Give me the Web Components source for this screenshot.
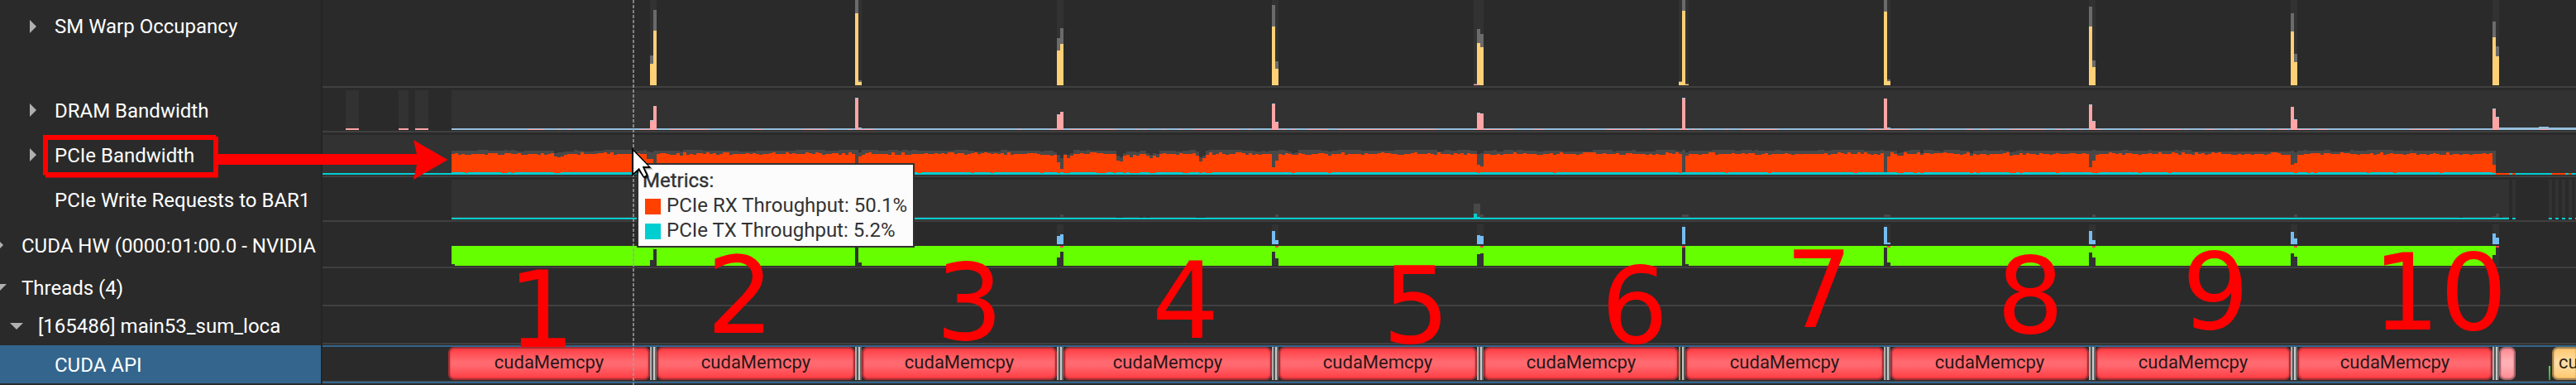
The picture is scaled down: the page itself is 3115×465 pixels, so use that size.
<!DOCTYPE html>
<html lang="en">
<head>
<meta charset="utf-8">
<title>Profiler timeline</title>
<style>
html,body{margin:0;padding:0;background:#2a2a2a;overflow:hidden}
body{font-family:Roboto,"Liberation Sans",sans-serif}
</style>
</head>
<body>
<profiler-app></profiler-app>

<template id="t-app">
<style>
:host{display:grid;grid-template-columns:388px 2px 2725px;width:3115px;height:465px;position:relative;overflow:hidden;background:#2a2a2a;color:#fff}
nav,main{display:flex;flex-direction:column;min-width:0}
.split{background:#242424}
</style>
<nav>
<tree-row h="106" pad="66" arrow="right" ax="36" lift="43">SM Warp Occupancy</tree-row>
<tree-row h="54" pad="66" arrow="right" ax="36">DRAM Bandwidth</tree-row>
<tree-row h="54" pad="66" arrow="right" ax="36">PCIe Bandwidth</tree-row>
<tree-row h="54" pad="66">PCIe Write Requests to BAR1</tree-row>
<tree-row h="56" pad="26" arrow="right" ax="-4">CUDA HW (0000:01:00.0 - NVIDIA</tree-row>
<tree-row h="46" pad="26" arrow="down" ax="-8">Threads (4)</tree-row>
<tree-row h="47" pad="46" arrow="down" ax="12">[165486] main53_sum_loca</tree-row>
<tree-row h="46" pad="66" selected>CUDA API</tree-row>
</nav>
<div class="split"></div>
<main>
<metric-lane kind="sm" y="0" h="106"></metric-lane>
<metric-lane kind="dram" y="106" h="54"></metric-lane>
<metric-lane kind="pcie" y="160" h="54"></metric-lane>
<metric-lane kind="bar" y="214" h="54"></metric-lane>
<metric-lane kind="hw" y="268" h="56"></metric-lane>
<metric-lane kind="none" y="324" h="46"></metric-lane>
<metric-lane kind="none" y="370" h="47"></metric-lane>
<api-lane></api-lane>
</main>
<timeline-cursor></timeline-cursor>
<metrics-tooltip><span slot="title">Metrics:</span>
<tooltip-item color="#ff4000">PCIe RX Throughput: 50.1%</tooltip-item>
<tooltip-item color="#00ced1">PCIe TX Throughput: 5.2%</tooltip-item>
</metrics-tooltip>
<mark-up></mark-up>
</template>

<script>
const shadow=(el,html)=>{const r=el.attachShadow({mode:'open'});r.innerHTML=html;return r};

customElements.define('tree-row',class extends HTMLElement{
  connectedCallback(){
    const a=n=>this.getAttribute(n), h=+a('h'), ar=a('arrow'), lift=+(a('lift')||0);
    const shape=ar==='right'?'M0 0 8 8 0 16Z':'M0 0H16L8 8Z';
    const w=ar==='right'?8:16, hh=ar==='right'?16:8;
    shadow(this,`<style>
:host{display:flex;align-items:center;box-sizing:border-box;height:${h}px;padding-bottom:${lift}px;flex:none;overflow:hidden;white-space:nowrap;
font-size:24px;line-height:30px;color:#fff;background:${this.hasAttribute('selected')?'#33658d':'transparent'}}
.a{width:${a('pad')}px;flex:none;display:flex}
svg{display:block;margin-left:${a('ax')||0}px;overflow:visible}
.t{display:block;padding-top:1px}
</style><span class="a">${ar?`<svg width="${w}" height="${hh}"><path d="${shape}" fill="#b0b0b0"/></svg>`:''}</span><span class="t"><slot></slot></span>`);
  }
});

// Sample columns are 4px wide, the first one starts at x=546.
let seed=11;
const rnd=()=>(seed=(seed*1103515245+12345)&0x7fffffff)/0x7fffffff;
const C={bg:'#323232',grey:'#484848',sm:'#6b6b6b',yel:'#ffd076',pink:'#ffa5a5',blue:'#97bfdd',cyan:'#00ced1',or:'#ff4000',green:'#66ff00',hw:'#75bdf3'};
const R=(x0,y0,x1,y1,f)=>`<rect x="${x0}" y="${y0}" width="${x1-x0}" height="${y1-y0}" fill="${f}"/>`;
const draw={
  sm(){
    let s='';
    // column x, peak top, average top
    const bgs=[[786,794],[1034,1042],[1278,1286],[1538,1546],[1782,1794],[2030,2042],[2278,2286],[2526,2534],[2770,2778],[3014,3022]];
    bgs.forEach(b=>s+=R(b[0],0,b[1],103,C.bg));
    [[786,67,77],[790,12,37],[1034,0,16],[1038,97,99],[1278,46,61],[1282,34,53],[1538,6,32],[1542,74,83],[1782,101,103],[1786,35,52],[1790,41,57],
     [2030,98,99],[2034,0,13],[2038,101,102],[2278,0,14],[2282,96,98],[2526,8,32],[2530,73,81],[2770,16,38],[2774,65,75],[3014,26,45],[3018,56,68]]
     .forEach(([x,p,v])=>s+=R(x,p,x+4,103,C.sm)+R(x,v,x+4,103,C.yel));
    return s+R(1782,102,1790,103,C.pink);
  },
  dram(){
    let s=R(546,109,3115,157,C.bg);
    [[418,434],[482,494],[502,518]].forEach(b=>s+=R(b[0],109,b[1],155,C.bg)+R(b[0],155,b[1],157,C.pink));
    s+=R(546,155,3022,157,C.blue)+R(3022,154,3115,157,C.blue)+R(3070,153,3082,156,C.blue)+R(3070,156,3082,157,C.pink);
    [[638,658],[674,678],[686,690],[774,786],[810,858],[910,922],[970,1002],[1026,1030],[1042,1058],[1230,1234],[1270,1278],[1294,1350],[1374,1378],[1382,1386],[1406,1410],[1426,1430],[1442,1498],[1510,1514],[1550,1554],[1562,1566],[1582,1606],[1618,1738],[1782,1830],[1854,1866],[1942,1986],[1990,2006],[2030,2042],[2046,2050],[2054,2058],[2086,2090],[2106,2150],[2258,2278],[2286,2310],[2334,2338],[2378,2386],[2394,2406],[2430,2474],[2486,2494],[2498,2502],[2514,2518],[2534,2542],[2590,2638],[2642,2646],[2666,2678],[2702,2706],[2742,2746],[2754,2766],[2778,2794],[2802,2814],[2914,2962]]
      .forEach(b=>s+=R(b[0],156,b[1],157,C.pink));
    // column x, write top, read top
    [[786,145,146],[790,128,128],[1034,118,119],[1038,154,156],[1278,138,139],[1282,135,135],[1538,125,126],[1542,147,148],[1786,136,137],[1790,137,137],[2034,118,119],[2278,119,119],[2282,154,156],[2526,126,127],[2530,146,147],[2770,129,129],[2774,144,145],[3014,131,132],[3018,141,142]]
      .forEach(([x,b,p])=>s+=R(x,b,x+4,157,C.blue)+R(x,p,x+4,157,C.pink));
    return s;
  },
  pcie(){
    let s=R(390,163,3115,211,C.bg);
    const dip={670:[185,189],674:[184,190],678:[184,189],682:[183,187],782:[183,192],786:[184,192],790:[182,208],822:[183,188],1034:[181,208],1038:[184,189],
      1258:[183,187],1262:[182,187],1266:[182,187],1270:[182,188],1274:[184,187],1278:[187,196],1282:[191,204],1286:[186,187],1290:[187,191],1294:[185,188],1350:[188,194],1354:[190,195],1358:[185,188],1362:[183,187],1366:[183,190],1370:[183,187],1374:[184,188],1386:[185,188],1390:[187,191],1394:[185,188],1398:[186,190],1446:[183,188],1450:[190,195],1454:[188,191],1458:[182,187],
      1538:[182,202],1542:[182,194],1786:[186,199],1790:[185,201],2034:[181,208],2038:[184,188],2278:[182,208],2282:[182,189],2526:[182,202],2530:[181,194],2770:[182,199],2774:[184,197],3014:[182,199],
      1562:[185,187],1566:[184,187],1606:[183,188],2294:[185,188],2298:[184,188],2322:[185,187],2382:[185,188],2430:[184,188],2434:[183,187]};
    let gt=182;
    for(let x=546;x<3018;x+=4){
      const a=rnd();
      gt=rnd()<.38?(rnd()<.35?181:rnd()<.8?182:183):gt;
      let o=a<.12?184:a<.33?185:a<.8?186:187;
      if(x<670&&a<.45)o=185;
      let g=gt; if(dip[x]){g=dip[x][0];o=dip[x][1]}
      const tx=rnd()<.055||(dip[x]&&o<200&&rnd()<.6)?209:208;
      s+=R(x,g,x+4,211,C.grey)+(o<208?R(x,o,x+4,209,C.or):'')+R(x,tx,x+4,211,C.cyan);
    }
    s+=R(390,209,546,211,C.cyan)+R(3018,209,3115,211,C.or);
    [[3034,3038],[3042,3086],[3102,3106],[3110,3114]].forEach(b=>s+=R(b[0],209,b[1],211,C.cyan));
    return s;
  },
  bar(){
    let s='';
    [[546,3034],[3038,3042],[3082,3086],[3090,3094],[3098,3102],[3106,3110],[3114,3115]].forEach(b=>s+=R(b[0],217,b[1],265,C.bg)+R(b[0],263,b[1],265,C.cyan));
    s+=R(546,262,3034,263,C.grey);
    [[1350,1358],[1378,1382],[1386,1390],[1446,1458],[2974,2978],[3022,3026]].forEach(b=>s+=R(b[0],262,b[1],263,C.bg));
    [[1282,4],[1542,4],[1790,4],[2034,8],[2278,8],[2530,4],[2774,4]].forEach(b=>s+=R(b[0],259,b[0]+b[1],262,C.grey));
    return s+R(3014,261,3018,263,C.grey)+R(3018,258,3022,263,C.grey)+R(1782,246,1790,263,C.grey)+R(1782,258,1786,263,C.cyan)+R(1786,262,1790,263,C.cyan);
  },
  hw(){
    let s=R(546,297,3018,321,C.green)+R(546,319,550,321,C.bg)+R(3018,299,3022,321,C.bg);
    [[786,794],[1034,1042],[1278,1286],[1538,1546],[1786,1794],[2034,2038],[2278,2286],[2526,2534],[2770,2778],[3014,3022]].forEach(b=>s+=R(b[0],271,b[1],295,C.bg));
    // kernel column x, top
    [[786,288],[790,281],[1034,274],[1278,285],[1282,283],[1538,279],[1542,290],[1786,284],[1790,285],[2034,274],[2278,274],[2282,293],[2526,279],[2530,290],[2770,280],[2774,288],[3014,282],[3018,287]].forEach(b=>s+=R(b[0],b[1],b[0]+4,295,C.hw));
    // memory column x, idle part top
    [[786,314],[790,301],[1034,299],[1038,317],[1278,311],[1282,304],[1538,304],[1542,312],[1786,307],[1790,306],[2034,299],[2038,319],[2278,299],[2282,317],[2526,305],[2530,311],[2770,306],[2774,310],[3014,308]].forEach(b=>s+=R(b[0],b[1],b[0]+4,321,C.bg));
    [1282,1542,1790,2034,2282,2530,2774,3018].forEach(x=>s+=R(x,297,x+4,299,'#ff4048'));
    return s;
  },
  none(){return ''}
};
customElements.define('metric-lane',class extends HTMLElement{
  connectedCallback(){
    const y=+this.getAttribute('y'),h=+this.getAttribute('h');
    const kind=this.getAttribute('kind');
    const ly=y===370?414:y+h-2;
    shadow(this,`<style>:host{display:block;height:${h}px;flex:none}svg{display:block}</style>
<svg width="2725" height="${h}" viewBox="390 ${y} 2725 ${h}" shape-rendering="crispEdges">${draw[kind]()}${R(390,ly,3115,ly+2,'#404040')}</svg>`);
  }
});

customElements.define('api-call',class extends HTMLElement{
  connectedCallback(){
    const tone={red:['#ff4249','#ff696f','#a92e33','#2d1517'],pink:['#ff8f98','#ffb0b6','#a8656a','#2d1517'],yellow:['#ffca74','#ffdda4','#a5834c','#2d2515']}[this.getAttribute('tone')||'red'];
    shadow(this,`<style>:host{display:flex;flex:none;box-sizing:border-box;height:40px;width:${this.getAttribute('w')}px;border:2px solid ${tone[2]};border-radius:7px;
background:linear-gradient(${tone[0]} 5%,${tone[1]} 42%,${tone[1]} 56%,${tone[0]} 95%);align-items:center;justify-content:center;color:${tone[3]};
box-shadow:inset 0 0 2px ${tone[2]};font-size:22px;line-height:30px;white-space:nowrap;overflow:hidden}
:host([cut]){justify-content:flex-start;border-right:0;border-radius:7px 0 0 7px;padding-left:6px}
span{display:block;margin-top:-3px}</style><span><slot></slot></span>`);
  }
});

customElements.define('api-gap',class extends HTMLElement{
  connectedCallback(){
    const c=this.getAttribute('c').split(',');
    shadow(this,`<style>:host{display:flex;flex:none;height:40px}i{width:2px;height:40px}</style>${c.map(v=>`<i style="background:${v}"></i>`).join('')}`);
  }
});

customElements.define('api-lane',class extends HTMLElement{
  connectedCallback(){
    const w=[244,240,236,252,240,236,240,240,236,236];
    const g='#aeaeae,#535353,#cacaca,#686868', y='#ad8d51,#303030,#c4c4c4,#555555';
    let s='';
    w.forEach((v,i)=>s+=`<api-call w="${v}">cudaMemcpy</api-call><api-gap c="${i===5?y:g}"></api-gap>`);
    shadow(this,`<style>:host{display:flex;flex:none;box-sizing:border-box;height:46px;border:solid #33658d;border-width:2px 0 2px 0;padding-left:152px;overflow:hidden;box-shadow:inset 0 -1px #4b4b4b}
.idle{width:40px;flex:none;display:flex;align-items:flex-end}.idle i{width:2px;height:17px;margin:0 0 2px auto;background:linear-gradient(#5bd65b,#3c9c3c)}
.idle b{width:2px}</style>
${s}<api-call w="20" tone="pink"></api-call><span style="width:4px;flex:none"></span><span class="idle"><i></i><b></b></span><api-call w="29" tone="yellow" cut>cu</api-call>`);
  }
});

customElements.define('timeline-cursor',class extends HTMLElement{
  connectedCallback(){
    shadow(this,`<style>:host{display:block;position:absolute;left:765px;top:0;width:2px;height:465px;background:repeating-linear-gradient(rgba(160,160,160,.75) 0 4px,transparent 4px 6px)}</style>`);
  }
});

customElements.define('tooltip-item',class extends HTMLElement{
  connectedCallback(){
    shadow(this,`<style>:host{display:flex;align-items:center;height:30px;gap:7px}i{width:19px;height:19px;background:${this.getAttribute('color')};margin:2px 0 0 1px}</style><i></i><span><slot></slot></span>`);
  }
});
customElements.define('metrics-tooltip',class extends HTMLElement{
  connectedCallback(){
    shadow(this,`<style>:host{display:block;position:absolute;box-sizing:border-box;left:770px;top:197px;width:336px;height:102px;padding:4px 0 0 7px;border:2px solid #303030;background:#fcfcfc;color:#333;font-size:24px;line-height:30px;white-space:nowrap;overflow:hidden}
.h{height:30px;margin-left:-2px;-webkit-text-stroke:.4px #333}</style><div class="h"><slot name="title"></slot></div><slot></slot>`);
  }
});

// Hand-drawn notes that lie over the timeline: box, arrow, numbers, mouse pointer.
customElements.define('mark-up',class extends HTMLElement{
  connectedCallback(){
    const n=[[1,614,419],[2,854.6,402],[3,1131.5,410],[4,1393,408],[5,1671.8,413.5],[6,1936,413.5],[7,2158.7,395],[8,2414.6,402],[9,2638.5,397],[10,2869,398]];
    shadow(this,`<style>:host{display:block;position:absolute;inset:0}svg{display:block}text{font:128px "DejaVu Sans",sans-serif;fill:#f00}</style>
<svg width="3115" height="465"><g fill="#f00"><path fill-rule="evenodd" d="M52 163H261V165H264V214.5H55V211.5H52ZM58 169V208H258V169Z"/>
<path d="M264 186H504L500 169 541.5 193 500 217 504 199H264Z"/></g>
${n.map(a=>`<text x="${a[1]}" y="${a[2]}">${a[0]}</text>`).join('')}
<g transform="translate(764 178)"><path d="M1 1.5V35L9 27.5 14.5 37 20 34.5 15.5 25H24Z" fill="#000" opacity=".35" transform="translate(1.5 1.5)"/><path d="M0 0V35L8.3 28 13.5 36Q15 37.5 17 36.5L19 35.5Q20 34 19 32L15.5 25H23.5Z" fill="#000"/><path d="M2 4.5V31L8.8 24.8 14.8 35 17.5 33.5 12.7 23H20Z" fill="#fff"/></g>
</svg>`);
  }
});

customElements.define('profiler-app',class extends HTMLElement{
  connectedCallback(){
    this.attachShadow({mode:'open'}).append(document.getElementById('t-app').content.cloneNode(true));
  }
});
</script>
</body>
</html>
